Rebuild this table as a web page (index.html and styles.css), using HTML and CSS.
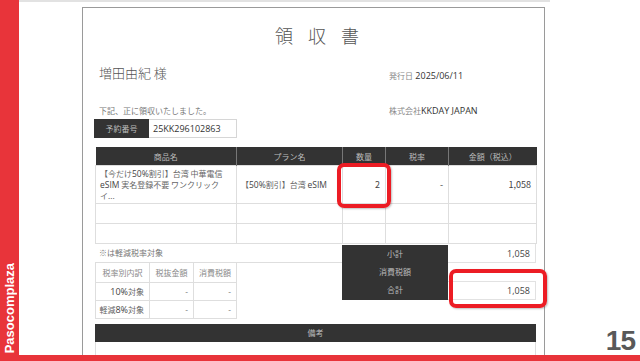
FILE: index.html
```html
<!DOCTYPE html>
<html lang="ja">
<head>
<meta charset="utf-8">
<title>領収書</title>
<link rel="stylesheet" href="styles.css">
</head>
<body>
<div class="page">
  <div class="side"><span class="side-text">Pasocomplaza</span></div>
  <div class="main">
    <div class="docarea">
      <div class="doc">
        <h1 class="title">領収書</h1>
        <div class="row row-name">
          <div class="col-left name">増田由紀 様</div>
          <div class="col-right issue"><span class="jp-s">発行日</span> <span class="date">2025/06/11</span></div>
        </div>
        <div class="row row-note">
          <div class="col-left note">下記、正に領収いたしました。</div>
          <div class="col-right company"><span class="jp-s">株式会社</span><span class="latin">KKDAY JAPAN</span></div>
        </div>
        <div class="booking">
          <div class="booking-label">予約番号</div>
          <div class="booking-value">25KK296102863</div>
        </div>
        <table class="items">
          <colgroup><col class="c1"><col class="c2"><col class="c3"><col class="c4"><col class="c5"></colgroup>
          <thead>
            <tr><th>商品名</th><th>プラン名</th><th>数量</th><th>税率</th><th>金額（税込）</th></tr>
          </thead>
          <tbody>
            <tr class="r-main">
              <td class="prod">【今だけ<span class="latin">50%</span>割引】台湾 中華電信<br><span class="latin">eSIM</span> 実名登録不要 ワンクリック<br>イ...</td>
              <td class="plan">【<span class="latin">50%</span>割引】台湾 <span class="latin">eSIM</span></td>
              <td class="num">2</td>
              <td class="num">-</td>
              <td class="num">1,058</td>
            </tr>
            <tr class="r-empty"><td></td><td></td><td></td><td></td><td></td></tr>
            <tr class="r-empty"><td></td><td></td><td></td><td></td><td></td></tr>
          </tbody>
        </table>
        <div class="lower">
          <div class="lower-left">
            <div class="reduced">※は軽減税率対象</div>
            <table class="tax">
              <colgroup><col class="t1"><col class="t2"><col class="t3"></colgroup>
              <thead><tr><th>税率別内訳</th><th>税抜金額</th><th>消費税額</th></tr></thead>
              <tbody>
                <tr><td class="num"><span class="latin">10%</span>対象</td><td class="num">-</td><td class="num">-</td></tr>
                <tr><td class="num">軽減<span class="latin">8%</span>対象</td><td class="num">-</td><td class="num">-</td></tr>
              </tbody>
            </table>
          </div>
          <div class="lower-gap"></div>
          <div class="sum-labels">
            <div>小計</div>
            <div>消費税額</div>
            <div>合計</div>
          </div>
          <div class="sum-values">
            <div class="sv sv-sub">1,058</div>
            <div class="sv sv-tax"></div>
            <div class="sv sv-total">1,058</div>
          </div>
        </div>
        <div class="remarks-head">備考</div>
        <div class="remarks-body"></div>
      </div>
    </div>
    <div class="pagenum">15</div>
  </div>
  <div class="bottom"></div>
  <div class="hl hl-qty"></div>
  <div class="hl hl-total"></div>
</div>
</body>
</html>
```

FILE: styles.css
```css
html, body {
  margin: 0;
  padding: 0;
  background: #ffffff;
}

.page {
  position: relative;
  width: 640px;
  height: 361px;
  overflow: hidden;
  display: grid;
  grid-template-columns: 19px 1fr;
  grid-template-rows: 355px 6px;
  font-family: "Open Sans", "Noto Sans CJK JP", sans-serif;
  color: #555;
}

.side {
  background: #e8343a;
  display: flex;
  flex-direction: column;
  justify-content: flex-end;
  align-items: center;
  padding-bottom: 2px;
}

.side-text {
  writing-mode: vertical-rl;
  transform: rotate(180deg);
  color: #ffffff;
  font-family: "Liberation Sans", Arial, sans-serif;
  font-weight: 700;
  font-size: 13px;
  line-height: 14px;
}

.main {
  display: flex;
  min-width: 0;
}

.docarea {
  width: 531px;
  box-sizing: border-box;
  border-top: 2px solid #e2e2e2;
  padding-left: 63px;
  padding-top: 5px;
}

.doc {
  width: 463px;
  height: 348px;
  box-sizing: border-box;
  border: 1px solid #9a9a9a;
  border-bottom: none;
  padding: 0 8px 0 12px;
  overflow: hidden;
}

.title {
  margin: 15px 0 0 0;
  font-family: "Noto Sans CJK JP", sans-serif;
  font-weight: 300;
  font-size: 18px;
  line-height: 24px;
  letter-spacing: 15px;
  padding-left: 18px;
  text-align: center;
  color: #555;
}

.row {
  display: flex;
  align-items: flex-end;
}

.col-left {
  width: 294px;
  padding-left: 4px;
  box-sizing: border-box;
}

.row-name {
  margin-top: 17px;
}

.name {
  font-family: "Noto Sans CJK JP", sans-serif;
  font-weight: 300;
  font-size: 13px;
  line-height: 18px;
  color: #555;
}

.issue {
  font-size: 9px;
  line-height: 12px;
}

.jp-s {
  font-family: "Noto Sans CJK JP", sans-serif;
  font-size: 8px;
  color: #888;
}

.date {
  color: #333;
  font-weight: 500;
}

.row-note {
  margin-top: 23px;
}

.note {
  font-family: "Noto Sans CJK JP", sans-serif;
  font-size: 8px;
  line-height: 12px;
  color: #777;
}

.company {
  font-size: 9px;
  line-height: 12px;
}

.latin {
  font-family: "Open Sans", sans-serif;
  color: #444;
}

.company .latin {
  color: #333;
}

.booking {
  display: flex;
  margin-top: 2px;
  margin-left: -1px;
  height: 19px;
}

.booking-label {
  width: 55px;
  background: #333;
  color: #bbb;
  font-family: "Noto Sans CJK JP", sans-serif;
  font-size: 8px;
  line-height: 19px;
  text-align: center;
}

.booking-value {
  width: 88px;
  box-sizing: border-box;
  border: 1px solid #d6d6d6;
  border-left: none;
  padding-left: 4px;
  font-size: 9px;
  line-height: 17px;
  color: #333;
}

.items {
  margin-top: 9px;
  width: 441px;
  border-collapse: collapse;
  table-layout: fixed;
}

.c1 { width: 141px; }
.c2 { width: 106px; }
.c3 { width: 43px; }
.c4 { width: 63px; }
.c5 { width: 88px; }

.items th {
  background: #333;
  color: #bbb;
  font-family: "Noto Sans CJK JP", sans-serif;
  font-weight: 400;
  font-size: 8px;
  height: 18px;
  padding: 0;
  border-left: 1px solid #777;
  text-align: center;
}

.items th:first-child {
  border-left: none;
}

.items td {
  border: 1px solid #dedede;
  font-size: 8px;
  color: #666;
  padding: 0 5px;
  font-family: "Noto Sans CJK JP", sans-serif;
}

.items .latin {
  font-size: 8.5px;
}

.items .r-main td {
  height: 37px;
  line-height: 11px;
}

.items .r-empty td {
  height: 19px;
}

.items td.prod {
  padding-left: 4px;
  padding-right: 0;
  white-space: nowrap;
  overflow: hidden;
}

.items td.plan {
  padding-left: 4px;
  white-space: nowrap;
}

.num {
  text-align: right;
  font-family: "Open Sans", "Noto Sans CJK JP", sans-serif;
  font-size: 9px;
  color: #444;
}

.items td.num {
  font-size: 9px;
  color: #444;
}

.lower {
  display: grid;
  grid-template-columns: 141px 106px 106px 88px;
  align-items: start;
}

.reduced {
  height: 18px;
  line-height: 18px;
  padding-left: 4px;
  font-family: "Noto Sans CJK JP", sans-serif;
  font-size: 8px;
  color: #777;
}

.tax {
  width: 141px;
  border-collapse: collapse;
  table-layout: fixed;
}

.t1 { width: 54px; }
.t2 { width: 44px; }
.t3 { width: 43px; }

.tax th {
  border: 1px solid #dedede;
  height: 19px;
  padding: 0;
  font-family: "Noto Sans CJK JP", sans-serif;
  font-weight: 400;
  font-size: 8px;
  color: #888;
  text-align: center;
}

.tax td {
  border: 1px solid #dedede;
  height: 17px;
  padding: 0 5px 0 0;
  font-size: 8px;
  color: #666;
  font-family: "Noto Sans CJK JP", sans-serif;
  white-space: nowrap;
}

.tax td.num {
  font-size: 8px;
  color: #666;
}

.tax .latin {
  font-size: 9px;
  color: #444;
}

.lower-gap {
  margin-top: 18px;
  border-top: 1px solid #dedede;
}

.sum-labels {
  margin-top: 1px;
  height: 55px;
  background: #333;
  color: #bbb;
  font-family: "Noto Sans CJK JP", sans-serif;
  font-size: 8px;
  line-height: 18px;
  text-align: center;
}

.sum-values {
  display: flex;
  flex-direction: column;
}

.sv {
  height: 18px;
  box-sizing: border-box;
  padding-right: 5px;
  text-align: right;
  font-size: 9px;
  line-height: 17px;
  color: #444;
}

.sv-sub {
  height: 19px;
  line-height: 19px;
  border-bottom: 1px solid #e2e2e2;
  border-right: 1px solid #e2e2e2;
}

.sv-total {
  height: 19px;
  border: 1px solid #e2e2e2;
  border-left: none;
}

.remarks-head {
  margin-top: 5px;
  height: 18px;
  background: #333;
  color: #bbb;
  font-family: "Noto Sans CJK JP", sans-serif;
  font-size: 8px;
  line-height: 18px;
  text-align: center;
}

.remarks-body {
  height: 30px;
  border: 1px solid #dedede;
  border-top: none;
}

.pagenum {
  flex: 1;
  display: flex;
  align-items: flex-end;
  justify-content: flex-end;
  padding-right: 5px;
  font-family: "Liberation Sans", Arial, sans-serif;
  font-weight: 700;
  font-size: 28px;
  line-height: 28px;
  letter-spacing: -1px;
  color: #595959;
}

.bottom {
  grid-column: 1 / -1;
  background: #e8343a;
}

.hl {
  position: absolute;
  box-sizing: border-box;
  border: 4px solid #ec1c24;
  border-radius: 7px;
  box-shadow: 1px 1px 2px rgba(0, 0, 0, 0.25);
}

.hl-qty {
  left: 337px;
  top: 163px;
  width: 54px;
  height: 45px;
}

.hl-total {
  left: 449px;
  top: 269px;
  width: 98px;
  height: 39px;
}
```
